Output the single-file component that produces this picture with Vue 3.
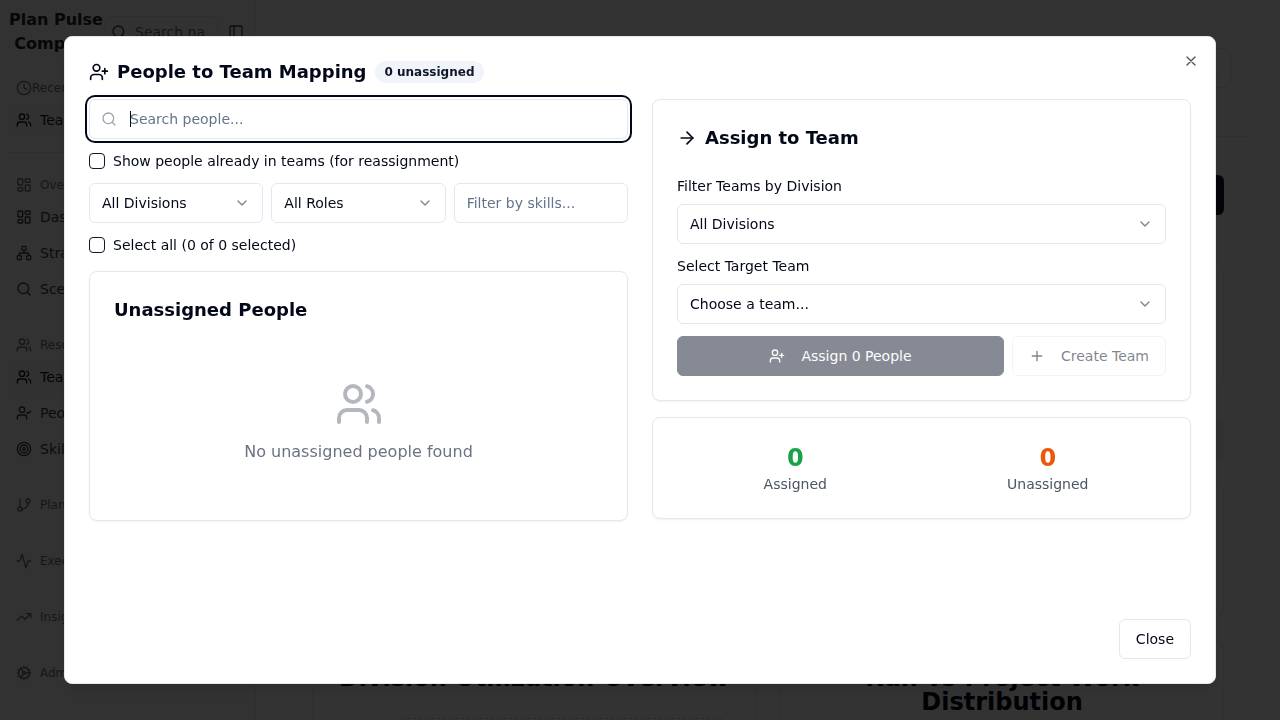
<script setup>
import { h, onMounted, ref } from 'vue'

const paths = {
  users: '<path d="M16 21v-2a4 4 0 0 0-4-4H6a4 4 0 0 0-4 4v2"/><circle cx="9" cy="7" r="4"/><path d="M22 21v-2a4 4 0 0 0-3-3.87"/><path d="M16 3.13a4 4 0 0 1 0 7.75"/>',
  userPlus: '<path d="M16 21v-2a4 4 0 0 0-4-4H6a4 4 0 0 0-4 4v2"/><circle cx="9" cy="7" r="4"/><path d="M19 8v6M22 11h-6"/>',
  userCheck: '<path d="M16 21v-2a4 4 0 0 0-4-4H6a4 4 0 0 0-4 4v2"/><circle cx="9" cy="7" r="4"/><path d="m16 11 2 2 4-4"/>',
  search: '<circle cx="11" cy="11" r="8"/><path d="m21 21-4.3-4.3"/>',
  chevron: '<path d="m6 9 6 6 6-6"/>',
  arrow: '<path d="M5 12h14"/><path d="m12 5 7 7-7 7"/>',
  plus: '<path d="M5 12h14M12 5v14"/>',
  close: '<path d="M18 6 6 18M6 6l12 12"/>',
  clock: '<circle cx="12" cy="12" r="10"/><path d="M12 6v6l4 2"/>',
  panel: '<rect x="3" y="3" width="18" height="18" rx="2"/><path d="M9 3v18"/>',
  dashboard: '<rect x="3" y="3" width="7" height="9" rx="1"/><rect x="14" y="3" width="7" height="5" rx="1"/><rect x="14" y="12" width="7" height="9" rx="1"/><rect x="3" y="16" width="7" height="5" rx="1"/>',
  network: '<rect x="16" y="16" width="6" height="6" rx="1"/><rect x="2" y="16" width="6" height="6" rx="1"/><rect x="9" y="2" width="6" height="6" rx="1"/><path d="M5 16v-3a1 1 0 0 1 1-1h12a1 1 0 0 1 1 1v3"/><path d="M12 12V8"/>',
  target: '<circle cx="12" cy="12" r="10"/><circle cx="12" cy="12" r="6"/><circle cx="12" cy="12" r="2"/>',
  branch: '<path d="M6 3v12"/><circle cx="18" cy="6" r="3"/><circle cx="6" cy="18" r="3"/><path d="M18 9a9 9 0 0 1-9 9"/>',
  activity: '<path d="M22 12h-2.48a2 2 0 0 0-1.93 1.46l-2.35 8.36a.25.25 0 0 1-.48 0L9.24 2.18a.25.25 0 0 0-.48 0l-2.35 8.36A2 2 0 0 1 4.49 12H2"/>',
  trend: '<path d="m22 7-8.5 8.5-5-5L2 17"/><path d="M16 7h6v6"/>',
  cog: '<path d="M12 20a8 8 0 1 0 0-16 8 8 0 0 0 0 16Z"/><path d="M12 14a2 2 0 1 0 0-4 2 2 0 0 0 0 4Z"/><path d="M12 2v2M12 22v-2M17 20.66l-1-1.73M11 10.27 7 3.34M20.66 17l-1.73-1M3.34 7l1.73 1M14 12h8M2 12h2M20.66 7l-1.73 1M3.34 17l1.73-1M17 3.34l-1 1.73M11 13.73l-4 6.93"/>',
}

const Icon = (props) =>
  h('svg', {
    viewBox: '0 0 24 24',
    fill: 'none',
    stroke: 'currentColor',
    'stroke-width': 2,
    'stroke-linecap': 'round',
    'stroke-linejoin': 'round',
    'aria-hidden': 'true',
    innerHTML: paths[props.name],
  })
Icon.props = ['name']

const groups = [
  {
    label: 'Overview', icon: 'dashboard',
    items: [
      { label: 'Dashboard', icon: 'dashboard' },
      { label: 'Strategy', icon: 'network' },
      { label: 'Scenarios', icon: 'search' },
    ],
  },
  {
    label: 'Resources', icon: 'users',
    items: [
      { label: 'Teams', icon: 'users', active: true },
      { label: 'People', icon: 'userCheck' },
      { label: 'Skills', icon: 'target' },
    ],
  },
  { label: 'Planning', icon: 'branch', items: [] },
  { label: 'Execution', icon: 'activity', items: [] },
  { label: 'Insights', icon: 'trend', items: [] },
  { label: 'Admin', icon: 'cog', items: [] },
]

const searchBox = ref(null)
const query = ref('')
onMounted(() => searchBox.value.focus())
</script>

<template>
  <div class="app">
    <aside class="sidebar">
      <div class="brand-row">
        <div class="brand">Plan Pulse Company</div>
        <label class="nav-search">
          <Icon name="search" class="i16" />
          <input type="text" placeholder="Search navigation..." aria-label="Search navigation" />
        </label>
        <button class="panel-btn" aria-label="Toggle sidebar"><Icon name="panel" class="i16" /></button>
      </div>
      <div class="group recent">
        <div class="group-label tight"><Icon name="clock" class="i16" />Recent</div>
        <a href="#" class="nav-item active"><Icon name="users" class="i16" />Teams</a>
      </div>
      <nav class="groups">
        <div v-for="g in groups" :key="g.label" class="group">
          <div class="group-label"><Icon :name="g.icon" class="i16" />{{ g.label }}</div>
          <a v-for="i in g.items" :key="i.label" href="#" class="nav-item" :class="{ active: i.active }">
            <Icon :name="i.icon" class="i16" />{{ i.label }}
          </a>
        </div>
      </nav>
    </aside>

    <main class="page">
      <div class="page-head"><div class="head-box"></div></div>
      <div class="page-body">
        <div class="primary-block"></div>
        <div class="panel summary"></div>
        <div class="muted-block"></div>
        <div class="panel details"></div>
        <div class="charts">
          <section class="panel chart">
            <h3>Division Utilization Overview</h3>
            <div class="gridline"></div>
          </section>
          <section class="panel chart"><h3>Run vs Project Work Distribution</h3></section>
        </div>
      </div>
    </main>

    <div class="overlay">
      <div class="dialog" role="dialog" aria-modal="true" aria-labelledby="dialog-title">
        <header class="dialog-head">
          <Icon name="userPlus" class="i20" />
          <h2 id="dialog-title">People to Team Mapping</h2>
          <span class="badge">0 unassigned</span>
        </header>
        <button class="x" aria-label="Close dialog"><Icon name="close" class="i16" /></button>

        <div class="columns">
          <div class="left">
            <div class="search" :class="{ blank: !query }">
              <Icon name="search" class="i16" />
              <input ref="searchBox" v-model="query" class="field" type="text" placeholder="Search people..." aria-label="Search people" />
            </div>
            <label class="check"><input type="checkbox" />Show people already in teams (for reassignment)</label>
            <div class="filters">
              <div class="select">
                <select class="field" aria-label="Division"><option>All Divisions</option></select>
                <Icon name="chevron" class="i16" />
              </div>
              <div class="select">
                <select class="field" aria-label="Role"><option>All Roles</option></select>
                <Icon name="chevron" class="i16" />
              </div>
              <input class="field" type="text" placeholder="Filter by skills..." aria-label="Filter by skills" />
            </div>
            <label class="check"><input type="checkbox" />Select all (0 of 0 selected)</label>
            <section class="card people">
              <h3>Unassigned People</h3>
              <div class="empty">
                <Icon name="users" class="i48" />
                <p>No unassigned people found</p>
              </div>
            </section>
          </div>

          <div class="right">
            <section class="card">
              <h3><Icon name="arrow" class="i20" />Assign to Team</h3>
              <div class="form">
                <div class="form-row">
                  <label for="team-division">Filter Teams by Division</label>
                  <div class="select">
                    <select id="team-division" class="field"><option>All Divisions</option></select>
                    <Icon name="chevron" class="i16" />
                  </div>
                </div>
                <div class="form-row">
                  <label for="target-team">Select Target Team</label>
                  <div class="select">
                    <select id="target-team" class="field"><option>Choose a team...</option></select>
                    <Icon name="chevron" class="i16" />
                  </div>
                </div>
                <div class="actions">
                  <button class="btn primary" disabled><Icon name="userPlus" class="i16" />Assign 0 People</button>
                  <button class="btn" disabled><Icon name="plus" class="i16" />Create Team</button>
                </div>
              </div>
            </section>
            <section class="card stats">
              <div><strong class="green">0</strong><span>Assigned</span></div>
              <div><strong class="orange">0</strong><span>Unassigned</span></div>
            </section>
          </div>
        </div>

        <footer class="dialog-foot"><button class="btn">Close</button></footer>
      </div>
    </div>
  </div>
</template>

<style>
*, *::before, *::after { box-sizing: border-box; }
body { margin: 0; background: #fff; }
h2, h3, p { margin: 0; }
</style>

<style scoped>
.app {
  display: flex;
  height: 100vh;
  overflow: hidden;
  font-family: "DejaVu Sans", sans-serif;
  font-size: 14px;
  line-height: 20px;
  color: #020817;
}
input, select, button { font: inherit; color: inherit; }
a { color: inherit; text-decoration: none; }
svg { flex: none; display: block; }
.i16 { width: 16px; height: 16px; }
.i20 { width: 20px; height: 20px; }
.i48 { width: 48px; height: 48px; }

.sidebar { flex: none; width: 256px; background: #fafafa; border-right: 1px solid #e5e7eb; color: #3f3f46; }
.brand-row { display: flex; align-items: flex-start; padding: 8px 8px 0; height: 72px; }
.brand { width: 96px; flex: none; text-align: center; font-size: 16px; font-weight: 700; line-height: 24px; color: #27272a; }
.nav-search {
  flex: 1;
  min-width: 0;
  display: flex;
  align-items: center;
  gap: 8px;
  height: 32px;
  margin-top: 8px;
  padding: 0 12px 0 6px;
  border: 1px solid #e5e7eb;
  border-radius: 6px;
}
.nav-search input { flex: 1; min-width: 0; padding: 0; border: 0; background: none; outline: none; }
.nav-search input::placeholder { color: #71717a; opacity: 1; }
.panel-btn { margin: 16px 3px 0 10px; padding: 0; border: 0; background: none; }
.recent { margin: 0 8px; padding-bottom: 16px; border-bottom: 1px solid #e5e7eb; }
.groups { display: flex; flex-direction: column; gap: 24px; padding: 16px 8px; }
.group { display: flex; flex-direction: column; }
.group-label { display: flex; align-items: center; gap: 8px; height: 32px; padding: 0 8px; font-size: 12px; line-height: 16px; color: #71717a; }
.group-label.tight { gap: 0; }
.nav-item { display: flex; align-items: center; gap: 8px; height: 32px; padding: 0 8px; border-radius: 6px; }
.nav-item + .nav-item { margin-top: 4px; }
.nav-item.active { background: #f4f4f5; color: #18181b; }

.page { flex: 1; min-width: 0; padding: 32px 32px 0; }
.page-head { display: flex; justify-content: flex-end; padding: 16px 16px 48px; border-bottom: 1px solid #e2e8f0; }
.head-box { width: 180px; height: 40px; border: 1px solid #e2e8f0; border-radius: 6px; }
.page-body { display: flex; flex-direction: column; padding: 38px 24px 0; }
.panel { border: 1px solid #e2e8f0; border-radius: 8px; }
.primary-block { align-self: flex-end; width: 140px; height: 40px; border-radius: 6px; background: #0f172a; }
.summary { height: 125px; margin-top: 47px; }
.muted-block { height: 40px; margin-top: 33px; border-radius: 6px; background: #f1f5f9; }
.details { height: 134px; margin-top: 23px; }
.charts { display: grid; grid-template-columns: 1fr 1fr; gap: 24px; margin-top: 24px; }
.chart { height: 400px; padding: 24px; }
.chart h3 { font-size: 24px; line-height: 24px; text-align: center; }
.gridline {
  height: 1px;
  margin: 28px 8px 0 64px;
  background: repeating-linear-gradient(90deg, #ccc 0 3px, transparent 3px 6px);
}

.overlay { position: fixed; inset: 0; display: flex; align-items: center; justify-content: center; background: rgba(0, 0, 0, 0.8); }
.dialog {
  position: relative;
  display: flex;
  flex-direction: column;
  gap: 16px;
  width: 90vw;
  height: 90vh;
  padding: 24px;
  background: #fff;
  border: 1px solid #e2e8f0;
  border-radius: 8px;
  box-shadow: 0 10px 15px -3px rgba(0, 0, 0, 0.1), 0 4px 6px -4px rgba(0, 0, 0, 0.1);
}
.dialog-head { display: flex; align-items: center; gap: 8px; height: 22px; }
h2, .card h3 { font-size: 18px; line-height: 28px; font-weight: 600; }
.badge { padding: 3px 10px; border-radius: 11px; background: #f1f5f9; color: #0f172a; font-size: 12px; line-height: 16px; font-weight: 600; }
.x { position: absolute; top: 16px; right: 16px; padding: 0; border: 0; background: none; opacity: 0.7; }

.columns { flex: 1; min-height: 0; display: grid; grid-template-columns: 1fr 1fr; gap: 24px; }
.left { display: flex; flex-direction: column; gap: 12px; }
.right { display: flex; flex-direction: column; gap: 16px; }

.field { display: block; width: 100%; min-width: 0; height: 40px; padding: 0 12px; background: #fff; border: 1px solid #e2e8f0; border-radius: 6px; outline: none; appearance: none; }
.field::placeholder { color: #64748b; opacity: 1; }
.field:focus { box-shadow: 0 0 0 2px #fff, 0 0 0 4px #020817; }
.search, .select { position: relative; }
.search .field { padding-left: 40px; }
.search svg { position: absolute; left: 12px; top: 12px; color: #9ca3af; }
.search.blank .field { caret-color: transparent; }
.search.blank:focus-within::after { content: ""; position: absolute; left: 41px; top: 12px; width: 1px; height: 16px; background: #020817; }
.select svg { position: absolute; right: 13px; top: 12px; opacity: 0.5; pointer-events: none; }
.filters { display: grid; grid-template-columns: repeat(3, 1fr); gap: 8px; }
.check { display: flex; align-items: center; gap: 8px; }
.check input { appearance: none; width: 16px; height: 16px; margin: 0; border: 1px solid #0f172a; border-radius: 4px; }

.card { padding: 24px; border: 1px solid #e2e8f0; border-radius: 8px; box-shadow: 0 1px 2px rgba(0, 0, 0, 0.05); }
.card h3 { display: flex; align-items: center; gap: 8px; }
.people { margin-top: 4px; }
.empty { display: flex; flex-direction: column; align-items: center; gap: 12px; padding: 56px 0 32px; color: #6b7280; font-size: 16px; line-height: 24px; }
.empty svg { opacity: 0.5; }
.form { display: flex; flex-direction: column; gap: 12px; margin-top: 24px; }
.form-row { display: flex; flex-direction: column; gap: 8px; }
.actions { display: flex; gap: 8px; }
.btn { display: flex; align-items: center; justify-content: center; gap: 16px; height: 40px; padding: 0 16px; background: #fff; border: 1px solid #e2e8f0; border-radius: 6px; white-space: nowrap; }
.btn:disabled { opacity: 0.5; }
.btn.primary { flex: 1; background: #0f172a; border-color: #0f172a; color: #f8fafc; }
.stats { display: grid; grid-template-columns: 1fr 1fr; gap: 16px; text-align: center; }
.stats strong { display: block; font-size: 24px; line-height: 32px; }
.stats span { display: block; color: #4b5563; }
.green { color: #16a34a; }
.orange { color: #ea580c; }
.dialog-foot { display: flex; justify-content: flex-end; }
</style>
